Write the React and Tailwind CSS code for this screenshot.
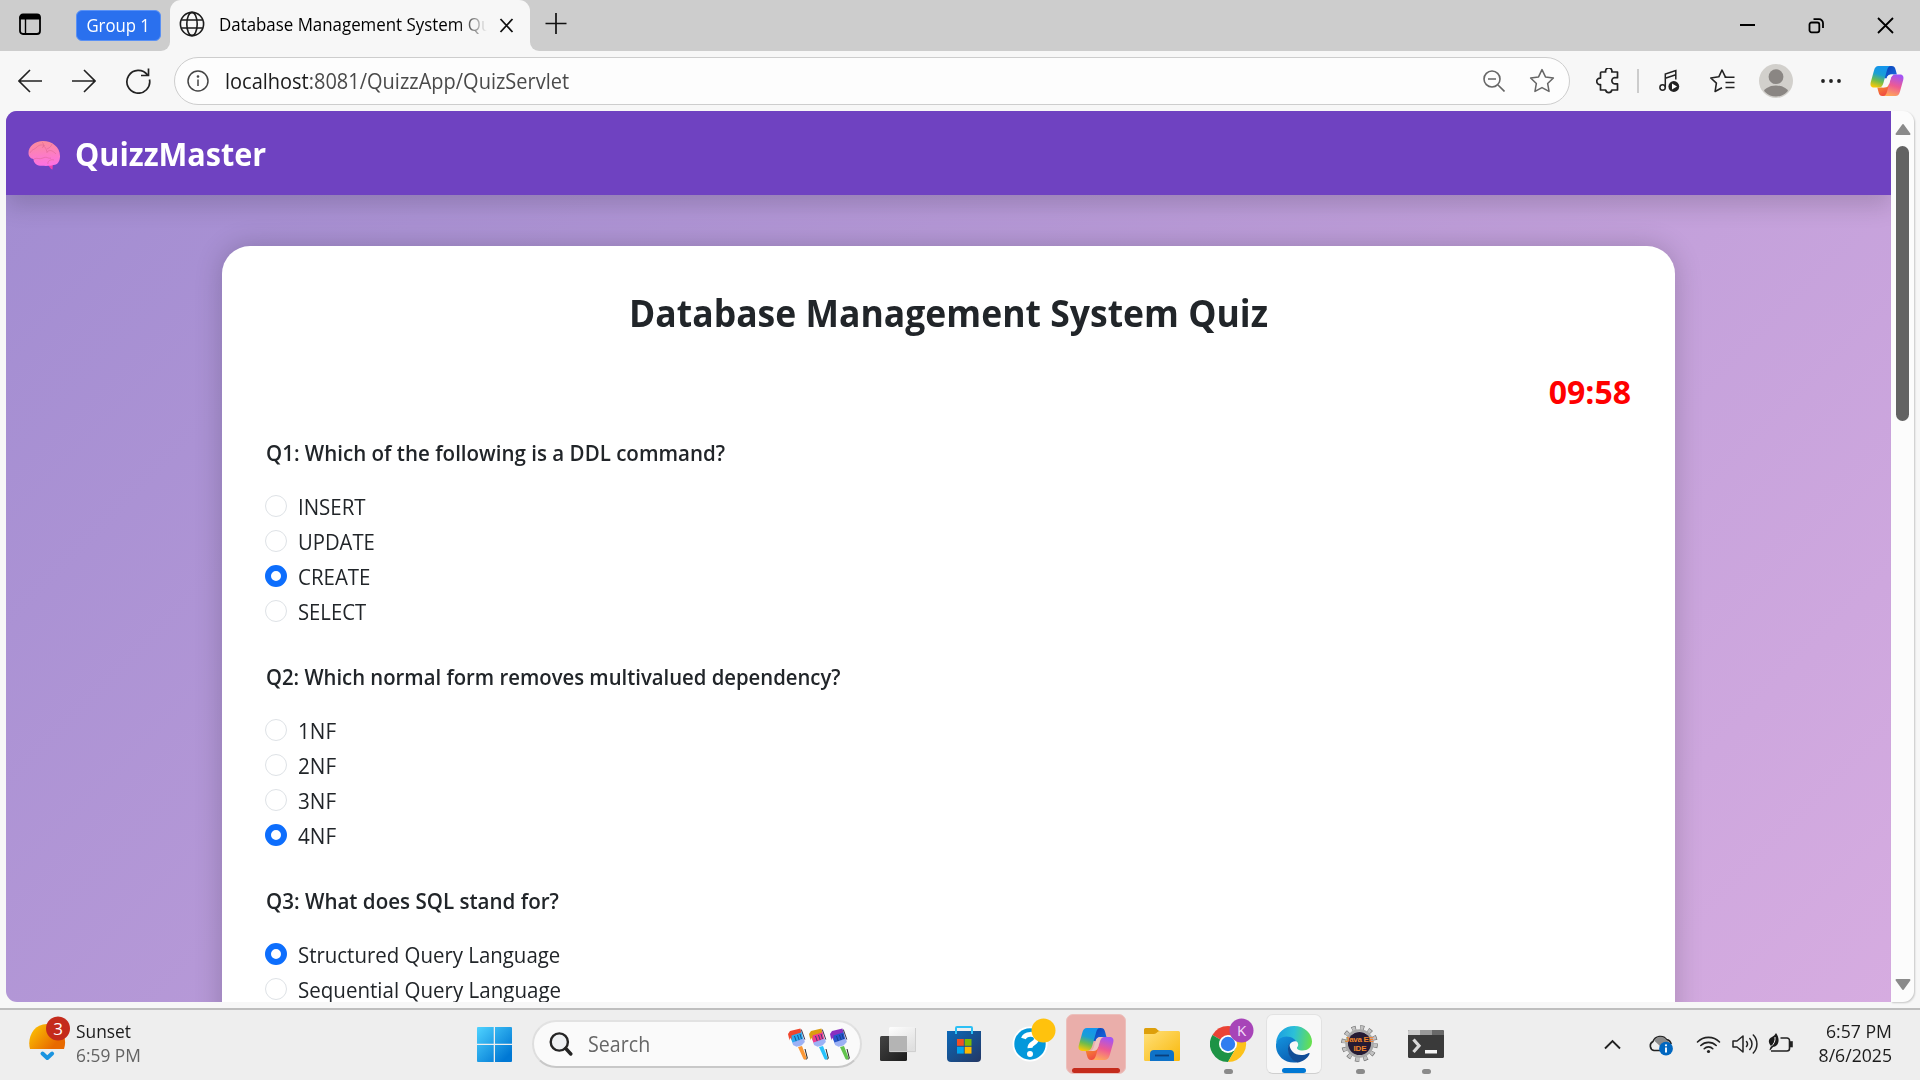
import React from "react";

const questions = [
  {
    text: "Q1: Which of the following is a DDL command?",
    fit: "scale-x-[0.933]",
    options: [
      ["INSERT", "scale-x-[0.93]"],
      ["UPDATE", "scale-x-[0.92]"],
      ["CREATE", "scale-x-[0.93]", true],
      ["SELECT", "scale-x-[0.92]"],
    ],
  },
  {
    text: "Q2: Which normal form removes multivalued dependency?",
    fit: "scale-x-[0.922]",
    options: [
      ["1NF", "scale-x-[0.94]"],
      ["2NF", "scale-x-[0.94]"],
      ["3NF", "scale-x-[0.94]"],
      ["4NF", "scale-x-[0.94]", true],
    ],
  },
  {
    text: "Q3: What does SQL stand for?",
    fit: "scale-x-[0.935]",
    options: [
      ["Structured Query Language", "scale-x-[0.928]", true],
      ["Sequential Query Language", "scale-x-[0.933]"],
    ],
  },
];

function TabStrip() {
  return (
    <div className="flex h-[51px] bg-[#cdcdcd] text-black">
      <svg className="ml-[18px] mt-[13px] h-[23px] w-[23px]" viewBox="0 0 23 23" fill="none" stroke="#000">
        <rect x="2" y="1.5" width="20" height="19.5" rx="3" strokeWidth="1.8" />
        <path d="M2 6V4.5a3 3 0 0 1 3-3h14a3 3 0 0 1 3 3V6z" fill="#000" />
        <path d="M7.5 6v15" strokeWidth="1.4" />
      </svg>
      <div className="ml-[35px] mt-[10px] flex h-[31px] w-[85px] items-center justify-center rounded-[6px] border border-[#5a91f5] bg-[#2a70ee] pb-[1px] text-[18px] leading-none text-white">
        <span className="scale-x-[0.93] whitespace-nowrap">Group 1</span>
      </div>
      <div className="h-[51px] w-[9px] bg-[#f7f7f7]">
        <div className="h-full w-full rounded-br-[9px] bg-[#cdcdcd]" />
      </div>
      <div className="flex h-[51px] w-[360px] items-center rounded-t-[11px] bg-[#f7f7f7] pb-[3px]">
        <svg className="ml-[9px] h-[26px] w-[26px]" viewBox="0 0 26 26" fill="none" stroke="#1b1b1b" strokeWidth="1.6">
          <circle cx="13" cy="13" r="11.6" />
          <ellipse cx="13" cy="13" rx="5.2" ry="11.6" />
          <path d="M2.3 9h21.4M2.3 17h21.4" />
        </svg>
        <div className="ml-[14px] w-[268px] overflow-hidden whitespace-nowrap text-[18px] leading-[28px] [mask-image:linear-gradient(to_right,black_240px,transparent_268px)]">
          <span className="inline-block origin-left scale-x-[0.938]">Database Management System Quiz</span>
        </div>
        <svg className="ml-[12px] mt-[3px] h-[15px] w-[15px]" viewBox="0 0 15 15" stroke="#111" strokeWidth="1.8">
          <path d="M1.5 1l12 13M13.5 1l-12 13" />
        </svg>
      </div>
      <div className="h-[51px] w-[9px] bg-[#f7f7f7]">
        <div className="h-full w-full rounded-bl-[9px] bg-[#cdcdcd]" />
      </div>
      <svg className="ml-[6px] mt-[12px] h-[22px] w-[22px]" viewBox="0 0 22 22" stroke="#111" strokeWidth="1.7">
        <path d="M11 1v21M.5 11.500h21" />
      </svg>
      <div className="ml-auto flex pr-[26px] pt-[17px]">
        <svg className="h-[17px] w-[17px]" viewBox="0 0 17 17" stroke="#000" strokeWidth="2">
          <path d="M1 8h15" />
        </svg>
        <svg className="ml-[52px] h-[17px] w-[17px]" viewBox="0 0 17 17" fill="none" stroke="#000" strokeWidth="1.8">
          <rect x="1.500" y="5.500" width="9.800" height="9.800" rx="2" />
          <path d="M5.500 2.200H11a4 4 0 0 1 4 4V11" />
        </svg>
        <svg className="ml-[52px] h-[17px] w-[17px]" viewBox="0 0 17 17" stroke="#000" strokeWidth="1.8">
          <path d="M1 1l15 15M16 1L1 16" />
        </svg>
      </div>
    </div>
  );
}

function CopilotLogo({ id, className }) {
  return (
    <svg className={className} viewBox="0 0 34 32">
      <defs>
        <linearGradient id={id + "a"} x1="0.6" y1="0" x2="0.3" y2="1">
          <stop offset="0.1" stopColor="#1596ea" />
          <stop offset="0.4" stopColor="#1a9fd4" />
          <stop offset="0.7" stopColor="#6fbc4c" />
          <stop offset="1" stopColor="#f6c80a" />
        </linearGradient>
        <linearGradient id={id + "b"} x1="0.6" y1="0" x2="0.3" y2="1">
          <stop offset="0" stopColor="#a354f4" />
          <stop offset="0.5" stopColor="#ee5a93" />
          <stop offset="1" stopColor="#ffa958" />
        </linearGradient>
        <linearGradient id={id + "c"} x1="0" y1="0" x2="1" y2="1">
          <stop offset="0.2" stopColor="#0d48bd" />
          <stop offset="1" stopColor="#1b6fe4" />
        </linearGradient>
        <linearGradient id={id + "d"} x1="0" y1="0" x2="0.5" y2="1">
          <stop offset="0" stopColor="#f59a2c" />
          <stop offset="1" stopColor="#f14a43" />
        </linearGradient>
      </defs>
      <path d="M16 1h5.500c2.800 0 3.500 1.500 4.200 4l1.200 4.500H22c-3 0-4.600 1.500-5.400 4L14 13z" fill={"url(#" + id + "c)"} />
      <path d="M18 31h-5.500c-2.600 0-3.300-1.500-4-4L7.300 22.500H12c3 0 4.600-1.500 5.400-4L20 19z" fill={"url(#" + id + "d)"} />
      <path d="M8.500 1H21c-2.400 0-3.200 1.700-4 4.300L13.400 18c-.9 3-2 4.500-5 4.500H4C.7 22.500 0 20 .8 17L4 5.500C4.800 2.500 6 1 8.500 1z" fill={"url(#" + id + "a)"} />
      <path d="M25.500 31H13c2.400 0 3.200-1.700 4-4.300L20.600 14c.9-3 2-4.500 5-4.500H30c3.300 0 4 2.500 3.200 5.500L30 26.500c-.8 3-2 4.500-4.500 4.500z" fill={"url(#" + id + "b)"} />
      <path d="M16.800 12.800c.6-2 1.800-3.300 4.400-3.300h2.300c-1.700.8-2.500 2.300-3 4.200l-1.600 5.500c-.6 2-1.800 3.300-4.400 3.300h-2.600c1.700-.8 2.700-2.300 3.200-4.200z" fill={id === "task" ? "#f0c4c1" : "#f7f7f7"} />
    </svg>
  );
}

const STAR = "M12 1.500l3.200 6.700 7.300 1-5.300 5.100 1.300 7.300L12 18.100l-6.500 3.500 1.300-7.300L1.500 9.200l7.300-1z";

function Toolbar() {
  return (
    <div className="flex h-[60px] items-center bg-[#f7f7f7]">
      <svg className="ml-[18px] h-[24px] w-[24px]" viewBox="0 0 24 24" fill="none" stroke="#222" strokeWidth="1.6">
        <path d="M24 12H1M12 1L1 12l11 11" />
      </svg>
      <svg className="ml-[30px] h-[24px] w-[24px]" viewBox="0 0 24 24" fill="none" stroke="#222" strokeWidth="1.6">
        <path d="M0 12h23M12 1l11 11-11 11" />
      </svg>
      <svg className="ml-[30px] h-[26px] w-[25px]" viewBox="0 0 25 26" fill="none" stroke="#222" strokeWidth="1.7">
        <path d="M23.500 11.500A11.400 11.400 0 1 1 21.500 7M22.500.5v7h-7.500" />
      </svg>
      <div className="ml-[23px] flex h-[48px] w-[1396px] items-center rounded-full border border-[#cdcdcd] bg-[#fdfdfd]">
        <svg className="ml-[12px] h-[22px] w-[22px]" viewBox="0 0 22 22" fill="none" stroke="#444" strokeWidth="1.500">
          <circle cx="11" cy="11" r="10" />
          <path d="M11 9.500v6.500" />
          <circle cx="11" cy="6.500" r=".6" fill="#444" />
        </svg>
        <span className="ml-[16px] origin-left scale-x-[0.952] text-[21px] leading-none text-[#4a4a4a]">
          <span className="text-[#1b1b1b]">localhost</span>:8081/QuizzApp/QuizServlet
        </span>
        <svg className="ml-auto h-[22px] w-[22px]" viewBox="0 0 22 22" fill="none" stroke="#666" strokeWidth="1.6">
          <circle cx="9" cy="9" r="8" />
          <path d="M15 15l6.500 6.500M5 9h8" />
        </svg>
        <svg className="ml-[24px] mr-[14px] h-[26px] w-[26px]" viewBox="0 0 24 24" fill="none" stroke="#666" strokeWidth="1.4" strokeLinejoin="round">
          <path d={STAR} />
        </svg>
      </div>
      <svg className="ml-[26px] h-[26px] w-[24px]" viewBox="0 0 24 26" fill="none" stroke="#222" strokeWidth="1.7" strokeLinejoin="round">
        <path d="M5.500 4h4.200a3.200 3.200 0 1 1 6.100 0H21.500v5.700h-1.500a3.200 3.200 0 1 0 0 6.100h1.500V22h-5.700a3.100 3.100 0 0 1-6.100 0H4.500v-5.500A3.200 3.200 0 1 1 4.500 10.200V5a1 1 0 0 1 1-1z" />
      </svg>
      <div className="ml-[17px] h-[24px] w-[2px] bg-[#cccccc]" />
      <svg className="ml-[20px] h-[24px] w-[21px]" viewBox="0 0 21 24" fill="none" stroke="#222" strokeWidth="1.500">
        <circle cx="3.600" cy="18.500" r="2.700" />
        <path d="M6.300 18.500V5l10.500-3.500v9M6.300 9.200l10.500-3.400" />
        <circle cx="14.800" cy="17.500" r="5.400" fill="#222" stroke="none" />
        <path d="M13 14.500v6l5-3z" fill="#fff" stroke="none" />
      </svg>
      <svg className="ml-[29px] h-[24px] w-[26px]" viewBox="0 0 26 24" fill="none" stroke="#222" strokeWidth="1.600" strokeLinejoin="round">
        <path d="M17.500 8.200L16.300 7.800L13 1 9.800 7.800l-8 1.200 5.600 5.200-1.300 8.300L13 18.700M15.500 8.200h10M16.500 13.500h9M16.500 18.500h9" />
      </svg>
      <svg className="ml-[24px] h-[34px] w-[34px]" viewBox="0 0 34 34">
        <defs>
          <clipPath id="avatar"><circle cx="17" cy="17" r="15.500" /></clipPath>
        </defs>
        <circle cx="17" cy="17" r="17" fill="#d2d0cc" />
        <circle cx="17" cy="12.700" r="7.400" fill="#8a8683" />
        <ellipse cx="17" cy="30" rx="13" ry="8.500" fill="#8a8683" clipPath="url(#avatar)" />
      </svg>
      <svg className="ml-[28px] h-[6px] w-[20px]" viewBox="0 0 20 6" fill="#222">
        <circle cx="2" cy="3" r="1.900" /><circle cx="10" cy="3" r="1.900" /><circle cx="18" cy="3" r="1.900" />
      </svg>
      <CopilotLogo id="tool" className="ml-[29px] h-[32px] w-[34px]" />
    </div>
  );
}

function Brain() {
  return (
    <svg className="mt-[3px] h-[30px] w-[32px]" viewBox="0 0 32 30">
      <defs>
        <linearGradient id="brain" x1="0.4" y1="0" x2="0.5" y2="1">
          <stop offset="0" stopColor="#fb8c9b" />
          <stop offset="1" stopColor="#fd70e4" />
        </linearGradient>
      </defs>
      <path d="M20 23h5l-.5 6.500c-2-.3-3-2.500-4.500-5z" fill="#ee3fae" />
      <path d="M15 1C7 1 .5 6 .5 13c0 4 2.500 5.500 5 6 0 5 4.500 7 8.500 6.800 4 .2 9 .2 11-.8 4.500.5 7-4 7-9C32 7 24 1 15 1z" fill="url(#brain)" />
      <path d="M2 13c2-4 4-3 7-6 2-2 5-3 8-1M14 2c2 2 2 4 0 6M15 7c2-2 4 4 4 6M19 12c3-3 6-1 9 2M6 19c3-2 5 1 9-1s5 1 8 0M24 4c-1 3-3 4-5 5M20 24c-1-3 3-5 6-4" fill="none" stroke="#d9618f" strokeWidth="0.9" opacity="0.55" />
    </svg>
  );
}

function Radio({ checked }) {
  return checked ? (
    <span className="h-[22px] w-[22px] rounded-full border-[6px] border-[#0d6efd] bg-white" />
  ) : (
    <span className="h-[22px] w-[22px] rounded-full border border-[#dee2e6] bg-white" />
  );
}

function Question({ q }) {
  return (
    <section className="mb-[31px]">
      <h2 className={"mb-[19px] ml-[1px] h-[34px] origin-left whitespace-nowrap text-[22px] font-semibold leading-[34px] " + q.fit}>{q.text}</h2>
      {q.options.map(([label, fit, checked]) => (
        <label key={label} className="flex h-[35px] items-center">
          <Radio checked={checked} />
          <span className={"ml-[11px] mt-[1px] origin-left whitespace-nowrap text-[22px] leading-[30px] " + fit}>{label}</span>
        </label>
      ))}
    </section>
  );
}

function QuizPage() {
  return (
    <div className="h-[891px] w-[1885px] overflow-hidden rounded-l-[11px]">
      <div className="flex h-[2815px] flex-col items-center bg-[linear-gradient(135deg,#a18cd1,#fbc2eb)]">
        <header className="flex h-[84px] w-full items-center bg-[#6f42c1] pl-[22px] shadow-[0_11px_22px_rgba(0,0,0,0.15)]">
          <Brain />
          <span className="ml-[15px] mt-[2px] origin-left scale-x-[0.955] text-[32px] font-bold leading-none text-white">QuizzMaster</span>
        </header>
        <main className="mt-[51px] h-[2500px] w-[1453px] rounded-[28px] bg-white px-[43px] pt-[43px] text-[#212529] shadow-[0_0_28px_rgba(0,0,0,0.2)]">
          <h1 className="scale-x-[0.935] text-center text-[38px] font-bold leading-[46px]">Database Management System Quiz</h1>
          <div className="mr-[1px] mt-[33px] text-right text-[32px] font-bold leading-[48px] text-[#ff0000]">09:58</div>
          <div className="mt-[19px]">
            {questions.map((q) => <Question key={q.text} q={q} />)}
          </div>
        </main>
      </div>
    </div>
  );
}

function ScrollBar() {
  return (
    <div className="flex h-[891px] w-[23px] flex-col items-center rounded-r-[11px] bg-[#fcfcfc] shadow-[1px_1px_2px_rgba(0,0,0,0.2)]">
      <svg className="mt-[12px] h-[12px] w-[16px]" viewBox="0 0 16 12"><path d="M1.500 11L8 2l6.500 9z" fill="#8b8b8b" stroke="#8b8b8b" strokeWidth="2" strokeLinejoin="round" /></svg>
      <div className="mt-[11px] h-[275px] w-[13px] rounded-full bg-[#636363]" />
      <svg className="mb-[11px] mt-auto h-[12px] w-[16px]" viewBox="0 0 16 12"><path d="M1.500 1L8 10l6.500-9z" fill="#8b8b8b" stroke="#8b8b8b" strokeWidth="2" strokeLinejoin="round" /></svg>
    </div>
  );
}

function Brush({ tip, bristle, handle }) {
  return (
    <svg className="h-[33px] w-[21px]" viewBox="0 0 21 33">
      <path d="M14 18l4.500 11.500c.5 2-2 3-3 1.500L10 19z" fill={handle} />
      <path d="M17 21l2.300 9-1 1.500" fill="none" stroke="#222" strokeWidth="1" />
      <path d="M1 6L13 2l2.500 10L5 16z" fill={bristle} />
      <path d="M0 6l2-3 10.500-2.500.5 4L3.500 7.500 3.800 12 2 9.500 1.500 12.500z" fill={tip} />
      <path d="M6.500 8l2 6M9.500 7l2 6M12 6l1.500 5" stroke="#123a78" strokeWidth=".8" />
      <path d="M4.500 14.500l11.500-4 .8 3.500L13.500 17.500l-5 1.200-3.500-1.700z" fill="#9cb1f5" />
      <path d="M13.300 1.500l3.500 10" stroke="#3b3350" strokeWidth="1" />
    </svg>
  );
}

function TaskCell({ children, dot, className = "" }) {
  return (
    <div className={"flex h-[60px] w-[56px] flex-col items-center rounded-[7px] " + className}>
      <div className="flex h-[55px] w-full items-center justify-center pt-[4px]">{children}</div>
      {dot}
    </div>
  );
}

const greyDot = <div className="h-[5px] w-[9px] rounded-full bg-[#8a8a8a]" />;

function Taskbar() {
  return (
    <div className="flex h-[72px] items-center border-t-2 border-[#bebebe] bg-[#eeeeee] pb-[2px]">
      <svg className="ml-[28px] mt-[5px] h-[46px] w-[44px] self-start" viewBox="0 0 44 46">
        <defs>
          <linearGradient id="sun" x1="0" y1="0.2" x2="1" y2="0.8">
            <stop offset="0" stopColor="#fcc203" /><stop offset="0.8" stopColor="#e86a00" />
          </linearGradient>
        </defs>
        <path d="M2 34C-1 23 5 9 19 9s21 14 17 25z" fill="url(#sun)" />
        <path d="M14.500 38.500l4.800 4.500 4.800-4.500" fill="none" stroke="#1a94e0" strokeWidth="4" strokeLinecap="round" strokeLinejoin="round" />
        <circle cx="30" cy="13.500" r="12" fill="#c42b1c" />
        <text x="30" y="19.500" textAnchor="middle" fontSize="17" fill="#fff" className="font-['Open_Sans']">3</text>
      </svg>
      <div className="mb-[2px] ml-[4px] w-[80px] origin-left scale-x-[0.965] whitespace-nowrap text-[18px] leading-[24px]">
        <div className="text-[#1b1b1b]">Sunset</div>
        <div className="text-[#636363]">6:59 PM</div>
      </div>
      <svg className="ml-[321px] h-[35px] w-[35px]" viewBox="0 0 35 35">
        <defs>
          <linearGradient id="win" gradientUnits="userSpaceOnUse" x1="0" y1="0" x2="30" y2="30">
            <stop offset="0" stopColor="#4fd3ff" /><stop offset="1" stopColor="#0078d4" />
          </linearGradient>
        </defs>
        <path d="M1 0h15.700v16.700H0V1a1 1 0 0 1 1-1zM18 0h16a1 1 0 0 1 1 1v15.700H18zM0 18h16.700v17H1a1 1 0 0 1-1-1zM18 18h17v16a1 1 0 0 1-1 1H18z" fill="url(#win)" />
      </svg>
      <div className="ml-[20px] flex h-[48px] w-[330px] items-center rounded-full border-2 border-b-[#c8c8c8] border-l-[#dedede] border-r-[#dedede] border-t-[#e2e2e2] bg-[#fafafa]">
        <svg className="ml-[15px] h-[24px] w-[24px]" viewBox="0 0 24 24" fill="none" stroke="#242424">
          <circle cx="10.300" cy="10" r="8.600" fill="#eff1f3" strokeWidth="2.400" />
          <path d="M16.800 16.500l5 5.500" strokeWidth="3.400" strokeLinecap="round" />
        </svg>
        <span className="ml-[15px] origin-left scale-x-[0.935] text-[21px] leading-none text-[#666]">Search</span>
        <div className="ml-auto mr-[9px] flex">
          <Brush tip="#f0452d" bristle="#2ba9ee" handle="#fb9837" />
          <Brush tip="#dc9d10" bristle="#ee3b8f" handle="#27c2fb" />
          <Brush tip="#8a2fc0" bristle="#2655cd" handle="#63c34e" />
        </div>
      </div>
      <svg className="ml-[17px] h-[36px] w-[38px]" viewBox="0 0 38 36">
        <defs>
          <linearGradient id="tv" x1="0" y1="0" x2="1" y2="1"><stop offset="0" stopColor="#444" /><stop offset="1" stopColor="#1c1c1c" /></linearGradient>
          <linearGradient id="tw" x1="0" y1="0" x2="0.6" y2="1"><stop offset="0" stopColor="#fff" stopOpacity="0.97" /><stop offset="1" stopColor="#ddd" stopOpacity="0.85" /></linearGradient>
        </defs>
        <rect x="1" y="10" width="27" height="25" rx="1.500" fill="url(#tv)" />
        <rect x="10" y="1" width="27" height="25" rx="1.500" fill="url(#tw)" />
        <path d="M10 10h18v16H11a1 1 0 0 1-1-1z" fill="#b4b4b4" />
        <path d="M11 25.600h25.500V2" fill="none" stroke="#cfcfcf" />
      </svg>
      <div className="ml-[19px] flex gap-[10px]">
        <TaskCell>
          <svg className="h-[36px] w-[34px]" viewBox="0 0 34 36">
            <defs><linearGradient id="store" x1="0" y1="0" x2="1" y2="1"><stop offset="0" stopColor="#0b68b8" /><stop offset="1" stopColor="#243764" /></linearGradient></defs>
            <path d="M9 7V2a1 1 0 0 1 1-1h14a1 1 0 0 1 1 1v5" fill="none" stroke="#2cc0f5" strokeWidth="2" />
            <path d="M0 5h34v27a4 4 0 0 1-4 4H4a4 4 0 0 1-4-4z" fill="url(#store)" />
            <path d="M9 5v3M25 5v3" stroke="#2cc0f5" strokeWidth="2" />
            <path d="M10 13h6.800v6.800H10z" fill="#f25022" /><path d="M17.700 13h6.800v6.800h-6.800z" fill="#7fba00" />
            <path d="M10 20.800h6.800v6.800H10z" fill="#00a4ef" /><path d="M17.700 20.800h6.800v6.800h-6.800z" fill="#ffb900" />
          </svg>
        </TaskCell>
        <TaskCell>
          <svg className="mb-[7px] ml-[7px] h-[44px] w-[44px] shrink-0" viewBox="0 0 44 44">
            <circle cx="18" cy="26" r="17.500" fill="#fff" />
            <circle cx="18" cy="26" r="15.700" fill="#0398db" />
            <path d="M11.500 20.500c1.500-5 12.500-6 13 0 .3 5-7 4.500-6.500 9.500" fill="none" stroke="#fff" strokeWidth="5" />
            <circle cx="18" cy="36" r="3" fill="#fff" />
            <circle cx="31.500" cy="12.500" r="12" fill="#ffc20d" />
          </svg>
        </TaskCell>
        <TaskCell className="-ml-[2px] w-[60px] border border-[#ecc0bc] bg-[#eaaeaa]" dot={<div className="-mt-[1px] h-[5px] w-[48px] shrink-0 rounded-full bg-[#c42b1c]" />}>
          <CopilotLogo id="task" className="h-[34px] w-[36px]" />
        </TaskCell>
        <TaskCell className="-ml-[2px]">
          <svg className="h-[34px] w-[36px]" viewBox="0 0 36 34">
            <defs><linearGradient id="folder" x1="0" y1="0" x2="1" y2="1"><stop offset="0" stopColor="#ffe07a" /><stop offset="1" stopColor="#f9b80a" /></linearGradient></defs>
            <path d="M0 10V2.500A1.500 1.500 0 0 1 1.500 1H11c2 0 2.500 3 5 3v6z" fill="#dd9f0b" />
            <path d="M0 7h10c3 0 3-3 6-3h18.500A1.500 1.500 0 0 1 36 5.500v27a1.500 1.500 0 0 1-1.500 1.500h-33A1.500 1.500 0 0 1 0 32.500z" fill="url(#folder)" />
            <path d="M6 34V27a4 4 0 0 1 4-4h16a4 4 0 0 1 4 4v7z" fill="#0e72c8" />
            <path d="M11 28.500h14" stroke="#0a3f7c" strokeWidth="1.800" />
          </svg>
        </TaskCell>
        <TaskCell dot={greyDot}>
          <svg className="mb-[6px] ml-[8px] h-[45px] w-[44px] shrink-0" viewBox="0 0 44 45">
            <path d="M18 26L2.400 17A18 18 0 0 1 33.600 17z" fill="#ea4335" />
            <path d="M18 26L2.400 17A18 18 0 0 0 18 44l8-14z" fill="#1d9345" />
            <path d="M18 17h15.600A18 18 0 0 1 18 44l8-14z" fill="#fcc21b" />
            <circle cx="18" cy="26" r="9" fill="#fff" /><circle cx="18" cy="26" r="7.200" fill="#2f7df0" />
            <circle cx="31.500" cy="12.500" r="12" fill="#a744b8" />
            <text x="31.500" y="18" textAnchor="middle" fontSize="15" fill="#f3dcf7" className="font-['Open_Sans']">K</text>
          </svg>
        </TaskCell>
        <TaskCell className="border border-[#e2e2e2] border-b-[#cfcfcf] bg-[#f8f8f8]" dot={<div className="-mt-[1px] h-[5px] w-[24px] shrink-0 rounded-full bg-[#0078d4]" />}>
          <svg className="h-[37px] w-[36px]" viewBox="0 0 36 37">
            <defs>
              <linearGradient id="e1" x1="0" y1="0.300" x2="1" y2="0.400"><stop offset="0" stopColor="#1b9de2" /><stop offset="0.500" stopColor="#2cc0d8" /><stop offset="1" stopColor="#66e04e" /></linearGradient>
              <linearGradient id="e2" x1="0" y1="0" x2="0.500" y2="1"><stop offset="0" stopColor="#1494df" /><stop offset="1" stopColor="#0b62b5" /></linearGradient>
            </defs>
            <path d="M0 17C1 6 9 0 18 0c11 0 18 8 18 15.500 0 6-4.500 9-9.500 9-4 0-6-1.500-5.500-3 2-2 1.500-5-1-6.500C12 9 4 12 0 17z" fill="url(#e1)" />
            <path d="M0 18c2-7 11-10 18-5 1 .7 2 1.500 2.500 2.500-5-1-8 3-8 8 0 6 4.500 11.500 10 12.500C10 39-1 30 0 18z" fill="url(#e2)" />
            <path d="M13.500 17c-4 7 0 17 8 19.500 5-.5 10-4 12-8.500.4-1-.4-1.300-1.200-.8C23 32 13 27 13.500 17z" fill="#104d97" />
          </svg>
        </TaskCell>
        <TaskCell dot={greyDot}>
          <svg className="-ml-[1px] h-[37px] w-[37px]" viewBox="0 0 37 37">
            <circle cx="18.500" cy="18.500" r="15.800" fill="none" stroke="#6d6d6d" strokeWidth="5" strokeDasharray="4.140 4.140" />
            <circle cx="18.500" cy="18.500" r="15.400" fill="none" stroke="#c2c2c2" strokeWidth="4.500" strokeDasharray="3.200 4.860" strokeDashoffset="-0.400" />
            <circle cx="18.500" cy="18.500" r="13" fill="none" stroke="#a8a8a8" strokeWidth="2.500" />
            <circle cx="18.500" cy="18.500" r="11.600" fill="#251b33" />
            <text x="18.500" y="17" textAnchor="middle" fontSize="8" fontWeight="700" fill="#ed8529" textLength="29" className="font-['Liberation_Sans']">Java EE</text>
            <text x="19" y="25.500" textAnchor="middle" fontSize="8" fontWeight="700" fill="#ed8529" textLength="13" className="font-['Liberation_Sans']">IDE</text>
          </svg>
        </TaskCell>
        <TaskCell dot={greyDot}>
          <svg className="h-[28px] w-[36px]" viewBox="0 0 36 28">
            <rect width="36" height="28" rx="1.500" fill="#3a3a3a" />
            <path d="M1.500 0H12v5H0V1.500A1.500 1.500 0 0 1 1.500 0z" fill="#c9c9c9" /><path d="M12 0h12v5H12z" fill="#999" /><path d="M24 0h10.500A1.500 1.500 0 0 1 36 1.500V5H24z" fill="#686868" />
            <path d="M5.500 9.500l5.500 6.300-5.500 6.200" fill="none" stroke="#d9d9d9" strokeWidth="3.200" />
            <path d="M17 20h12v3.500H17z" fill="#f3f3f3" />
          </svg>
        </TaskCell>
      </div>
      <div className="ml-auto flex items-center">
        <svg className="h-[11px] w-[17px]" viewBox="0 0 17 11" fill="none" stroke="#222" strokeWidth="1.900"><path d="M1 9.500l7.500-7.500L16 9.500" /></svg>
        <svg className="ml-[27px] mt-[2px] h-[22px] w-[25px]" viewBox="0 0 25 22">
          <path d="M6 16.500a4.800 4.800 0 0 1-1-9C7 2 15 .5 18.500 5.500 21 6 22.500 7.500 23 9.500l-9 7z" fill="#eee" stroke="#222" strokeWidth="1.600" />
          <path d="M6 6.500C9 1.500 15.500 1.500 18.500 6l3.500 2.500-10 3.500z" fill="#8b8b8b" />
          <circle cx="18" cy="14.700" r="6.900" fill="#0067c0" />
          <path d="M18 13.500v5" stroke="#fff" strokeWidth="1.900" /><circle cx="18" cy="11.300" r="1.100" fill="#fff" />
        </svg>
        <svg className="ml-[23px] h-[19px] w-[25px]" viewBox="0 0 25 19" fill="none" stroke="#222" strokeWidth="1.600" strokeLinecap="round">
          <path d="M1.500 7a15.500 15.500 0 0 1 22 0M4.800 10.500a11 11 0 0 1 15.400 0M8.200 13.700a6 6 0 0 1 8.600 0" />
          <circle cx="12.500" cy="16.500" r="1.600" fill="#222" stroke="none" />
        </svg>
        <svg className="ml-[11px] h-[20px] w-[26px]" viewBox="0 0 26 20" fill="none" stroke="#222" strokeWidth="1.500" strokeLinecap="round" strokeLinejoin="round">
          <path d="M1 7h4l6-5v16l-6-5H1zM14.500 7.500a4 4 0 0 1 0 5M17.800 4.500a8 8 0 0 1 0 11M21.300 1a13 13 0 0 1 0 18" />
        </svg>
        <svg className="mb-[2px] ml-[10px] h-[20px] w-[25px]" viewBox="0 0 25 20" fill="none" stroke="#222" strokeWidth="1.600">
          <path d="M12.500 5H19a2.500 2.500 0 0 1 2.500 2.500v8A2.500 2.500 0 0 1 19 18H3" />
          <path d="M22.500 9h1.500v4.500h-1.500z" fill="#222" />
          <path d="M8 0c3 4 3.500 9 1 12-1 1.300-3 2-4 2l-3 3.500-.5-.8L3 13C-.5 9 .5 5.500 4 4c1.500-.7 3-2 4-4z" fill="#1b1b1b" stroke="none" />
          <path d="M7 4c.5 4-1 7-4 9.500" stroke="#eee" strokeWidth="1" />
        </svg>
        <div className="mb-[2px] ml-[19px] mr-[28px] w-[80px] origin-right scale-x-[0.98] whitespace-nowrap text-right text-[18px] leading-[24px] text-[#1b1b1b]">
          <div>6:57 PM</div>
          <div>8/6/2025</div>
        </div>
      </div>
    </div>
  );
}

export default function App() {
  return (
    <div className="flex h-[1080px] w-[1920px] flex-col overflow-hidden bg-[#f7f7f7] font-['Open_Sans','Noto_Sans',sans-serif]">
      <TabStrip />
      <Toolbar />
      <div className="flex h-[897px] pl-[6px]">
        <QuizPage />
        <ScrollBar />
      </div>
      <Taskbar />
    </div>
  );
}
